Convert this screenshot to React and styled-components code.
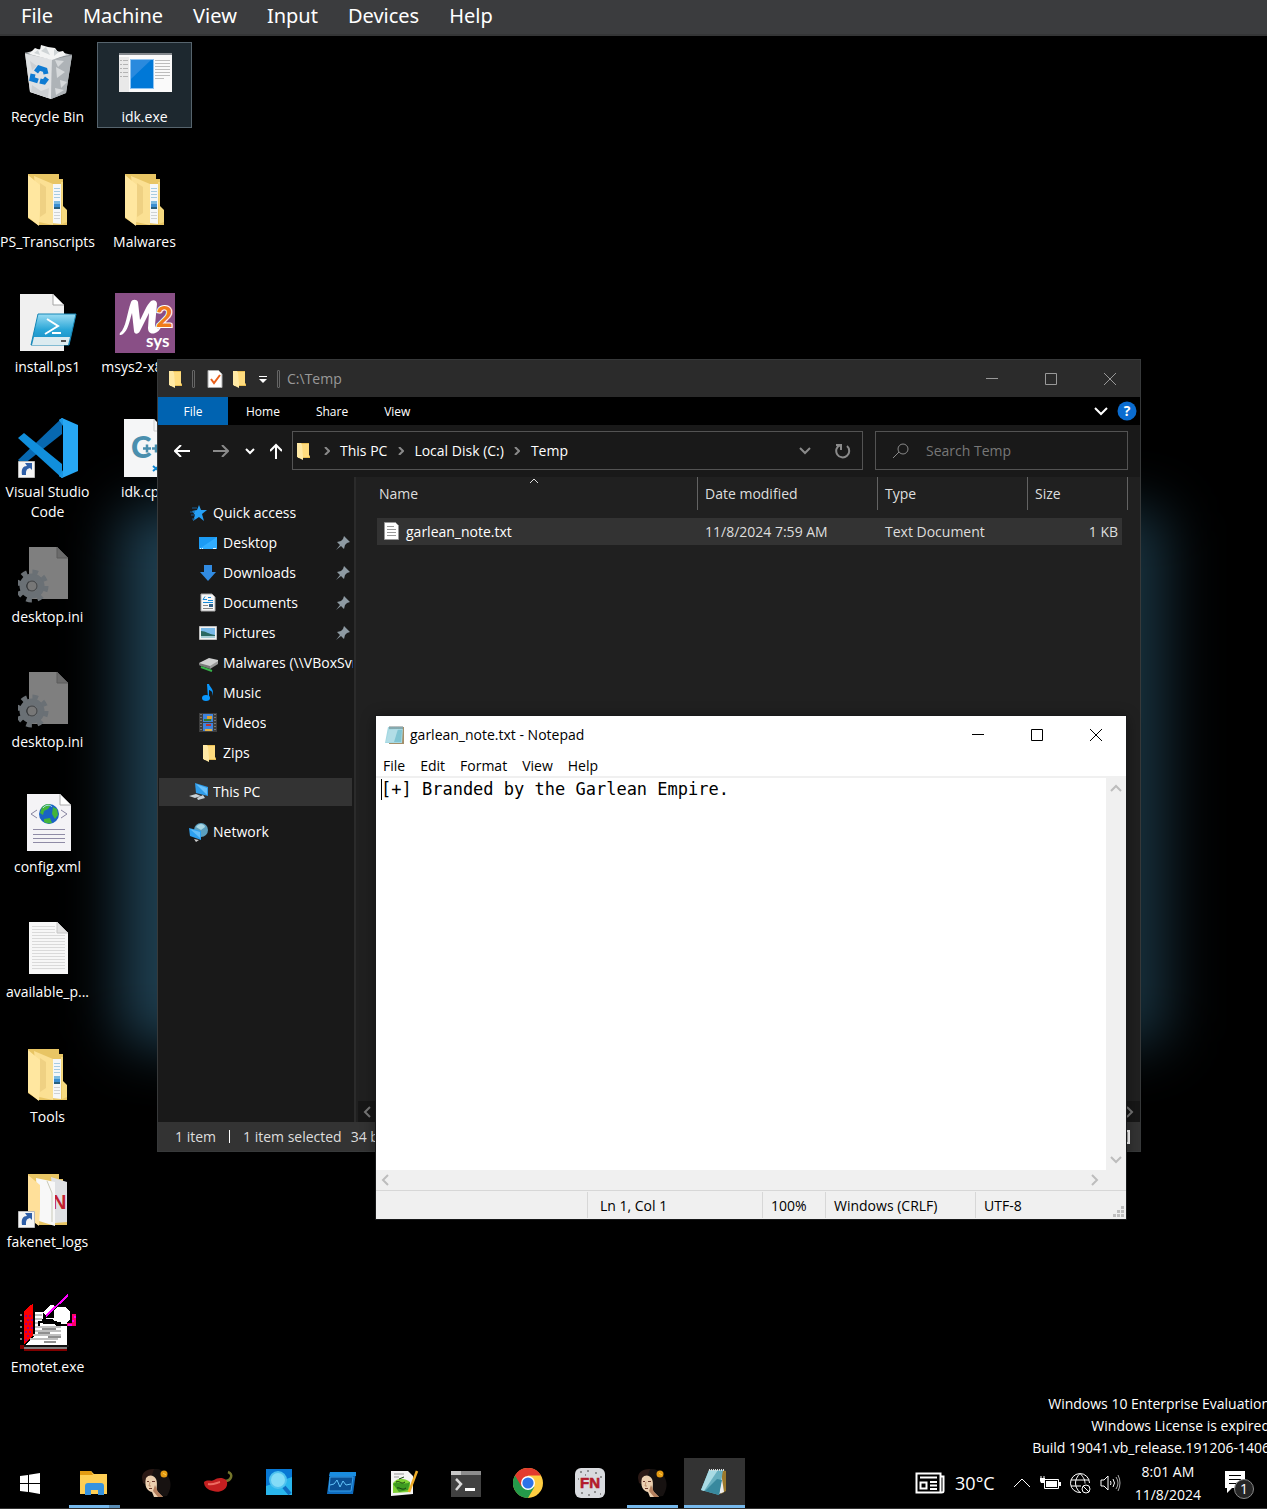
import React from "react";
import styled, { createGlobalStyle } from "styled-components";

const ui = `"Open Sans", "Noto Sans", sans-serif`;

const GlobalStyle = createGlobalStyle`
  * { box-sizing: border-box; }
  body { margin: 0; background: #000; font-family: ${ui}; font-size: 14px; line-height: 20px; color: #fff; }
  button, input, textarea { font: inherit; color: inherit; border: 0; padding: 0; margin: 0; background: none; outline: 0; border-radius: 0; }
  a { color: inherit; text-decoration: none; }
  ul { list-style: none; margin: 0; padding: 0; }
  svg { display: block; flex: none; }
`;

/* ---------- shell ---------- */

const Shell = styled.div`
  min-height: 100vh;
  display: flex;
  flex-direction: column;
  overflow: hidden;
`;

const HostMenu = styled.nav`
  height: 36px;
  display: flex;
  align-items: center;
  gap: 30px;
  padding: 0 21px 2px;
  background: #3b3c3e;
  border-bottom: 2px solid #343536;
  font: 20px/30px "Noto Sans", sans-serif;
`;

const Desktop = styled.main`
  position: relative;
  flex: 1;
  padding-top: 6px;
  background: #000;
`;

const Glow = styled.div`
  position: absolute;
  top: 472px;
  bottom: 412px;
  left: 120px;
  right: 100px;
  border-radius: 20px;
  background: linear-gradient(90deg, #1f4052, #18323f);
  filter: blur(28px);
`;

const IconGrid = styled.div`
  position: relative;
  display: grid;
  grid-auto-flow: column;
  grid-template-rows: repeat(11, 125px);
  grid-auto-columns: 95px;
  column-gap: 2px;
  align-items: start;
`;

const Shortcut = styled.button`
  display: flex;
  flex-direction: column;
  align-items: center;
  gap: 2px;
  padding: 1px 0 0;
  min-height: 86px;
  white-space: normal;
  ${(p) => p.$selected && "background: #1d282f; box-shadow: inset 0 0 0 1px #56646d;"}
`;

const Label = styled.span`
  width: 100%;
  padding-top: 2px;
  text-align: center;
  line-height: 20px;
`;

const Watermark = styled.div`
  position: absolute;
  right: -3px;
  bottom: -1px;
  text-align: right;
  line-height: 22px;
`;

/* ---------- shared window parts ---------- */

const WinButtons = styled.div`
  display: flex;
  margin-left: auto;
  padding-right: 1px;
  height: 100%;
  color: ${(p) => p.$color};
`;

const WinButton = styled.button`
  width: 59px;
  display: grid;
  place-items: center;
`;

const Muted = styled.span`
  display: block;
  color: #8a8a8a;
`;

/* ---------- explorer ---------- */

const Explorer = styled.section`
  position: absolute;
  left: 157px;
  top: 323px;
  width: 984px;
  height: 793px;
  display: flex;
  flex-direction: column;
  background: #191919;
  border: 1px solid #37393a;
  overflow: hidden;
`;

const ExTitle = styled.header`
  height: 37px;
  display: flex;
  align-items: center;
  padding-left: 7px;
  background: #2b2b2b;
  color: #999;
`;

const QuickButton = styled.button`
  width: ${(p) => p.$w || 25}px;
  display: grid;
  place-items: center;
`;

const Bar = styled.span`
  width: 3px;
  height: 18px;
  border: 1px solid #666;
  border-radius: 1px;
`;

const ExCaption = styled.h1`
  margin: 0 0 0 5px;
  font: inherit;
`;

const Ribbon = styled.nav`
  height: 28px;
  display: flex;
  align-items: stretch;
  background: #000;
  font-size: 12px;
`;

const RibbonTab = styled.button`
  padding: 1px 18px 0;
  ${(p) => p.$file && "width: 70px; background: #0063b1;"}
`;

const RibbonEnd = styled.div`
  margin-left: auto;
  display: flex;
  align-items: center;
  gap: 8px;
  padding-right: 3px;
`;

const NavRow = styled.div`
  height: 52px;
  display: flex;
  align-items: center;
  padding: 0 12px 1px 4px;
`;

const NavButton = styled.button`
  width: ${(p) => p.$w}px;
  height: 36px;
  display: grid;
  place-items: center;
`;

const Address = styled.div`
  flex: 1;
  height: 39px;
  display: flex;
  align-items: center;
  border: 1px solid #535353;
`;

const Crumb = styled.a`
  white-space: nowrap;
`;

const CrumbSep = styled.span`
  width: 27px;
  display: grid;
  place-items: center;
`;

const AddressEnd = styled.div`
  margin-left: auto;
  display: flex;
`;

const Search = styled.label`
  width: 253px;
  height: 39px;
  margin-left: 12px;
  display: flex;
  align-items: center;
  gap: 17px;
  padding-left: 16px;
  border: 1px solid #535353;
  input { flex: 1; min-width: 0; }
  input::placeholder { color: #777; opacity: 1; }
`;

const ExBody = styled.div`
  flex: 1;
  min-height: 0;
  display: flex;
`;

const Sidebar = styled.aside`
  width: 198px;
  padding: 21px 0 0 1px;
  border-right: 2px solid #2b2b2b;
`;

const Branch = styled.ul`
  display: flex;
  flex-direction: column;
  margin-bottom: ${(p) => p.$after || 0}px;
`;

const TreeItem = styled.a`
  height: ${(p) => (p.$short ? 28 : 30)}px;
  margin-right: ${(p) => (p.$root ? 2 : 0)}px;
  padding: 0 ${(p) => (p.$pin ? 3 : 1)}px 0 ${(p) => (p.$root ? 30 : 40)}px;
  display: flex;
  align-items: center;
  gap: 4px;
  white-space: nowrap;
  background: ${(p) => (p.$active ? "#333" : "transparent")};
  svg:last-child { margin-left: auto; }
`;

const TreeLabel = styled.span`
  overflow: hidden;
`;

const FilePane = styled.div`
  flex: 1;
  min-width: 0;
  display: flex;
  flex-direction: column;
  background: #202020;
`;

const Table = styled.table`
  width: calc(100% - 33px);
  margin-left: 21px;
  table-layout: fixed;
  border-collapse: separate;
  border-spacing: 0;
`;

const Th = styled.th`
  width: ${(p) => p.$w || "auto"};
  padding: 0 0 8px;
  font-weight: 400;
  text-align: left;
  color: #dedede;
`;

const HeadCell = styled.div`
  position: relative;
  height: 33px;
  display: flex;
  align-items: center;
  padding-left: ${(p) => (p.$first ? 2 : 7)}px;
  border-right: 1px solid #636363;
`;

const SortMark = styled.span`
  position: absolute;
  top: 1px;
  left: 50%;
  margin-left: -8px;
`;

const Td = styled.td`
  height: 27px;
  padding: 0 7px;
  background: #333;
  color: #dedede;
  text-align: ${(p) => (p.$end ? "right" : "left")};
  ${(p) => p.$end && "padding-right: 4px; border-right: 6px solid #202020;"}
`;

const FileLink = styled.a`
  display: flex;
  align-items: center;
  gap: 6px;
  color: #fff;
`;

const DarkScroll = styled.div`
  height: 21px;
  margin: auto 0 0 2px;
  display: flex;
  justify-content: space-between;
  align-items: center;
  padding: 0 5px 0 4px;
  background: #171717;
  color: #777;
`;

const ExStatus = styled.footer`
  height: 29px;
  display: flex;
  align-items: center;
  padding: 0 10px 0 17px;
  background: #333;
  color: #dedede;
  svg { margin-left: auto; }
`;

const StatusSplit = styled.span`
  width: 1px;
  height: 13px;
  margin: 0 13px;
  background: #fff;
`;

const Gapped = styled.span`
  margin-left: 9px;
`;

/* ---------- notepad ---------- */

const Notepad = styled.section`
  position: absolute;
  left: 376px;
  top: 680px;
  width: 750px;
  height: 503px;
  display: flex;
  flex-direction: column;
  background: #fff;
  color: #000;
  box-shadow: 0 0 0 1px #18191a, 0 2px 14px rgba(0, 0, 0, 0.45);
`;

const NpTitle = styled.header`
  height: 37px;
  display: flex;
  align-items: center;
  gap: 5px;
  padding-left: 9px;
`;

const NpCaption = styled.h2`
  margin: 0;
  font: inherit;
`;

const NpMenu = styled.nav`
  height: 25px;
  display: flex;
  align-items: center;
  gap: 15px;
  padding: 2px 0 0 7px;
  border-bottom: 2px solid #f0f0f0;
`;

const NpBody = styled.div`
  position: relative;
  flex: 1;
  display: flex;
`;

const Editor = styled.textarea`
  flex: 1;
  padding: 0 5px;
  resize: none;
  overflow: hidden;
  white-space: pre;
  font: 17px/22px "DejaVu Sans Mono", monospace;
`;

const Caret = styled.span`
  position: absolute;
  left: 5px;
  top: 1px;
  width: 1px;
  height: 21px;
  background: #000;
`;

const VScroll = styled.div`
  width: 20px;
  display: flex;
  flex-direction: column;
  justify-content: space-between;
  align-items: center;
  padding: 5px 0;
  background: #f0f0f0;
  color: #bdbdbd;
`;

const HScroll = styled.div`
  height: 20px;
  display: flex;
  justify-content: space-between;
  align-items: center;
  padding: 0 26px 0 4px;
  background: #f0f0f0;
  color: #bdbdbd;
`;

const NpStatus = styled.footer`
  height: 29px;
  display: grid;
  grid-template-columns: 1fr 175px 63px 150px 151px;
  align-items: stretch;
  border-top: 1px solid #d7d7d7;
  background: #f0f0f0;
`;

const NpCell = styled.span`
  position: relative;
  display: flex;
  align-items: center;
  margin: 1px 0;
  padding: 1px 0 0 ${(p) => (p.$wide ? 12 : 8)}px;
  ${(p) => !p.$blank && "border-left: 1px solid #d7d7d7;"}
`;

const Grip = styled.span`
  margin: auto 2px 1px auto;
`;

/* ---------- taskbar ---------- */

const Taskbar = styled.footer`
  position: relative;
  height: 51px;
  display: flex;
  background: #000;
  border-bottom: 1px solid #333;
`;

const TaskButton = styled.button`
  position: relative;
  width: 62px;
  padding-right: 2px;
  display: grid;
  place-items: center;
  ${(p) => p.$active && "background: #333; background-clip: content-box; padding-right: 1px;"}
  &:first-child { width: 64px; padding-right: 4px; }
`;

const Running = styled.span`
  position: absolute;
  bottom: 0;
  left: ${(p) => (p.$full ? 0 : 5)}px;
  right: ${(p) => (p.$full ? 1 : 6)}px;
  height: 3px;
  background: #76b9ed;
  ${(p) => p.$stack && "border-right: 11px solid #5a8db5;"}
`;

const Tray = styled.div`
  margin-left: auto;
  display: flex;
  align-items: center;
  padding-right: 13px;
`;

const Weather = styled.button`
  display: flex;
  align-items: center;
  gap: 10px;
  margin-right: 18px;
  font-size: 18px;
`;

const TrayIcons = styled.div`
  display: flex;
  align-items: center;
  gap: 9px;
`;

const Clock = styled.button`
  margin: 0 22px 0 14px;
  line-height: 23px;
  text-align: center;
`;

/* ---------- drawings ---------- */

const Art = ({ size = 60, box = size, h, children, ...rest }) => (
  <svg width={size} height={h || size} viewBox={`0 0 ${box} ${h || box}`} fill="none" aria-hidden="true" {...rest}>
    {children}
  </svg>
);

const Arrow = ({ d, w = 12, h = 12, s = 2 }) => (
  <svg width={w} height={h} viewBox={`0 0 ${w} ${h}`} fill="none" stroke="currentColor" strokeWidth={s} aria-hidden="true">
    <path d={d} />
  </svg>
);

const ShortcutMark = () => (
  <g>
    <path d="M.5 43.5h16v16H.5z" fill="#f4f4f4" stroke="#b9b9b9" />
    <path d="M4 57c-1-6 1-9 5-9l-2-3h7v7l-2-2c-4 1-4 3-4 7z" fill="#2f5fa8" />
  </g>
);

const BinArt = () => (
  <Art>
    <path d="M7 10L26 5l28 7-6 38-15 6-21-7z" fill="#c9cdd0" />
    <path d="M7 10l27 6-1 40-21-7z" fill="#dfe1e3" />
    <path d="M34 16l20-4-6 38-15 6z" fill="#aeb3b7" />
    <path d="M7 10l27 6 20-4" stroke="#8e9498" />
    <path d="M11 11l6-6 5 2 1-5 7 2 7 1 3 4 5-1 3 4-14 5z" fill="#f3f4f4" />
    <path d="M23 8l5-4 4 8zm13-2l5 3-5 4zM16 10l4-3 2 5z" fill="#cfd4d6" />
    <path d="M38 24l9 5-8 6zm4 13l7 2-6 6zm-5-20l9 1-6 6zM37 45l9 2-8 5z" fill="#d6d9db" />
    <path d="M12 18l7 5-5 4zM14 42l9 6 8-3-1 10-17-6z" fill="#cdd0d3" />
    <g stroke="#0f7bd2" strokeWidth="5">
      <path d="M18 29l3-4 6 2 1 4" />
      <path d="M15 31l-1 5 6 2" />
      <path d="M29 35l-3 4-4-1" />
    </g>
  </Art>
);

const AppWindowArt = () => (
  <Art>
    <path d="M4 10h53v39H4z" fill="#fafafa" />
    <path d="M4 10h53v2H4z" fill="#84898e" />
    <path d="M4 14h10v35H4z" fill="#e9e9e9" />
    <path d="M15 16h24v30H15z" fill="#8dc3f2" />
    <path d="M16 17h22v28H16z" fill="#0078d7" />
    <path d="M16 17h20L16 36z" fill="#2a8ade" />
    <path d="M40 17.500h15M40 20.500h15M40 23.500h15M40 26.500h15M40 29.500h15M40 32.500h15M40 35.500h9" stroke="#bdbdbd" />
    <path d="M5 17.500h8M5 21.500h8M5 25.500h8M5 29.500h8M5 33.500h8" stroke="#b4b4b4" strokeDasharray="2 1 5" />
  </Art>
);

const FolderBack = () => <path d="M10 6h31v5h4v30l4 3v13H20L10 50z" fill="#e8c564" />;

const FolderArt = () => (
  <Art>
    <FolderBack />
    <path d="M34 16h9v40l-9-1z" fill="#f5f7f8" />
    <path d="M36 20.500h6M36 23.500h6M36 26.500h6M36 29.500h6" stroke="#a8cbe0" />
    <path d="M36 33h6v4h-6z" fill="#7dbbe0" />
    <path d="M36 36h6v3h-6z" fill="#3b8ed0" />
    <path d="M36 39h6v2h-6z" fill="#28607e" />
    <path d="M36 44.500h6M36 47.500h6M36 50.500h6" stroke="#ced2d4" />
    <path d="M43 14h2v24l4 4v12l-5 2z" fill="#f5d97f" />
    <path d="M16 8l19 8v41l-14-3z" fill="#fbe093" />
    <path d="M22 15l6 4v26l-6 4z" fill="#efd183" />
    <path d="M10 7l12 10v24l-1 17-11-9z" fill="#ffe7a0" />
  </Art>
);

const LogsFolderArt = () => (
  <Art>
    <FolderBack />
    <path d="M33 9l16 5v40l-12 1z" fill="#dfe1e4" />
    <text x="34" y="41" fontFamily="Liberation Sans, sans-serif" fontWeight="700" fontSize="20" fill="#c3202e">N</text>
    <path d="M18 10l19 4v44l-16-5z" fill="#f8f8f8" />
    <path d="M29 13l5 12v29" stroke="#c9c9b8" />
    <path d="M10 7l12 10v24l-1 17-11-9z" fill="#ffe09a" />
    <ShortcutMark />
  </Art>
);

const ScriptArt = () => (
  <Art>
    <defs>
      <linearGradient id="ps" x1="0" y1="0" x2="0" y2="1">
        <stop stopColor="#9adcf3" />
        <stop offset=".5" stopColor="#2ba7d8" />
        <stop offset="1" stopColor="#1387bf" />
      </linearGradient>
    </defs>
    <path d="M2 1h33l11 11v46H2z" fill="#f0f0f0" />
    <path d="M35 1v11h11z" fill="#fff" stroke="#a5a5a5" />
    <path d="M20 21h38l-7 31H13z" fill="url(#ps)" stroke="#1686b5" />
    <path d="M16 44h36l-2 8H14z" fill="#dcebf0" />
    <path d="M29 26l11 7-13 8M34 40h9" stroke="#fff" strokeWidth="2" />
    <path d="M43 47h5v2h-5z" fill="#555" />
  </Art>
);

const MsysArt = () => (
  <Art>
    <path d="M0 0h60v60H0z" fill="#894f86" />
    <path d="M5 40C11 35 12 20 16 9c1-3 6-3 7 0l2 18C29 20 31 13 36 8c3-2 6 0 6 3l-2 21c1 4 3 4 6 2-3 8-13 9-13 1l1-15-9 18c-2 4-6 3-6 0l-2-18c-3 10-4 17-9 21-3 2-4 1-3-1z" fill="#fff" />
    <text x="41" y="34" fontFamily="Lato, sans-serif" fontSize="29" fontWeight="900" fill="#f07c1c" stroke="#fff" strokeWidth="2" paintOrder="stroke">2</text>
    <text x="31" y="54" fontFamily="Lato, sans-serif" fontSize="17" fontWeight="700" fill="#fff">sys</text>
  </Art>
);

const CodeArt = () => (
  <Art>
    <path d="M0 42L44 0v16L6 46z" fill="#0768b0" />
    <path d="M0 20l6-5 38 31v14z" fill="#118fdc" />
    <path d="M44 0l16 7v46l-16 7-3-2 4-4V6l-4-4z" fill="#27a7f4" />
    <path d="M41 2l4-2v60l-4-2 4-6V8z" fill="#1b96e4" />
    <ShortcutMark />
  </Art>
);

const CppArt = () => (
  <Art>
    <path d="M9 1h30l11 11v47H9z" fill="#f5f6f7" />
    <path d="M39 1v12h12" stroke="#ccc" />
    <text x="16" y="40" fontFamily="Lato, sans-serif" fontWeight="900" fontSize="31" fill="#4a8fae">C</text>
    <path d="M28 30.500h8M32 26.500v8M37 30.500h8M41 26.500v8" stroke="#4a8fae" strokeWidth="2.500" />
    <path d="M38 48l6 5M38 53l6-5" stroke="#0d84cf" strokeWidth="2" />
  </Art>
);

const GearFileArt = () => (
  <Art>
    <path d="M11 4h28l11 11v41H11z" fill="#7f7f7f" />
    <path d="M39 4v11h11z" fill="#6b6b6b" stroke="#5c5c5c" />
    <g transform="translate(14 43)">
      <circle r="9" stroke="#6a7075" strokeWidth="7" />
      <circle r="14" stroke="#6a7075" strokeWidth="5" strokeDasharray="5.500 5.495" />
      <circle r="5" fill="#777" stroke="#3c3f42" />
    </g>
  </Art>
);

const XmlArt = () => (
  <Art>
    <path d="M9 1h33l11 11v46H9z" fill="#f4f3f6" />
    <path d="M42 1v11h11z" fill="#fff" stroke="#aaa" />
    <circle cx="31" cy="21" r="10" fill="#1a63c4" />
    <path d="M24 14c3-3 7-4 9-2l-3 4-4 2-1 4-3-2zM35 14l4 2 1 6-3 4-3-5zM26 26l6-1 2 5c-3 1-6 0-8-1z" fill="#43b53b" />
    <path d="M25 15c3-4 8-3 9-1" stroke="#a9dcf5" />
    <path d="M19 17l-6 4 6 4M43 17l6 4-6 4" stroke="#8784a0" />
    <path d="M15 36.500h32M15 41.500h32M15 45.500h32M15 49.500h32" stroke="#8f8ba6" />
  </Art>
);

const TextFileArt = () => (
  <Art>
    <path d="M11 4h28l11 11v41H11z" fill="#f7f7f7" />
    <path d="M14 8.500h23M14 11.500h23M14 14.500h23M14 17.500h33M14 20.500h33M14 23.500h33M14 26.500h33M14 29.500h33M14 32.500h33M14 35.500h33M14 38.500h33M14 41.500h33M14 44.500h33M14 47.500h33M14 50.500h33" stroke="#dadada" />
    <path d="M39 4v11h11z" fill="#e2e2e2" stroke="#c6c6c6" />
  </Art>
);

const EmotetArt = () => (
  <Art shapeRendering="crispEdges">
    <path d="M2 21h2v2H2zm0 6h2v2H2zm0 6h2v2H2zm0 6h2v2H2zm0 6h2v2H2z" fill="#808080" />
    <path d="M6 19l4-5 5-3v32l-9 8z" fill="#f00" />
    <path d="M7 22h2v2H7zm4 0h2v2h-2zm-2 4h2v2H9zm4 0h2v2h-2zm-6 4h2v2H7zm4 0h2v2h-2zm-2 4h2v2H9zm4 0h2v2h-2zm-6 4h2v2H7zm4 0h2v2h-2zm-2 4h2v2H9zM7 46h2v2H7z" fill="#a0007e" />
    <path d="M17 19h8v12h18v-2h6v23H8l9-10z" fill="#fff" />
    <path d="M17 22h7M17 26h7M17 30h5M17 34h26M17 38h26M15 42h28M12 46h28" stroke="#c0c0c0" strokeWidth="2" />
    <path d="M24 36h14M20 40h12M30 44h13M26 49h12" stroke="#909090" strokeWidth="2" />
    <path d="M36 17l3-3h9l4 5v7l-3 3H37l-3-3h-6v-2l8-2z" fill="#fff" />
    <path d="M34 17h2v8h-8v-2h6zM24 26h2v4h-4v3h-2v-5h4zM29 28h9l3 3h8v2H39l-4-3h-6z" fill="#000" />
    <path d="M25 20l7-8h4v2l-9 8z" fill="#fff" />
    <path d="M28 23L50 2" stroke="#f0f" strokeWidth="2" />
    <path d="M54 21h4v12h-9v-3h5z" fill="#ff006a" />
    <path d="M56 23h2v2h-2zm-2 4h2v2h-2zm-4 4h4v2h-4z" fill="#f0f" />
    <path d="M6 54h43v2H6z" fill="#808080" />
    <path d="M6 52h45v2H6z" fill="#111" />
    <path d="M6 56h43v2H6zM2 52h4v4H2z" fill="#800000" />
  </Art>
);

const MiniFolder = () => (
  <Art size={20} h={20}>
    <path d="M5 2h11v12l1 1v2H5z" fill="#e9bf55" />
    <path d="M4 2h4l2 3v14l-6-3z" fill="#ffe9a5" />
    <path d="M9 3h7v13h-6z" fill="#ffdc7e" />
  </Art>
);

const QuickStar = () => (
  <Art size={20}>
    <path d="M10 2l2 5h6l-5 4 2 7-5-4-6 4 2-6-3-4 5-1z" fill="#26a0f5" />
    <path d="M3 5h5M1 9h5M2 12h4M3 16h3" stroke="#1a5d91" />
  </Art>
);
const DesktopMini = () => (
  <Art size={20}>
    <path d="M0 4h18v12H0z" fill="#1c9bf4" />
    <path d="M0 16L18 4v12z" fill="#31adff" />
    <path d="M1 15.500h1M3 15.500h1M14 15.500h3" stroke="#e8f6ff" />
  </Art>
);
const DownMini = () => (
  <Art size={20}><path d="M5 2h8v7h4l-8 9-8-9h4z" fill="#318be2" /></Art>
);
const DocMini = () => (
  <Art size={20}>
    <path d="M2 1h11l3 3v14H2z" fill="#f7f7f7" stroke="#aaa" />
    <path d="M4 6.500h4M6 3.500l-2 3M4 9.500h10M9 4.500h3M9 7.500h5" stroke="#168ad8" />
    <path d="M4 12.500h5M4 15.500h10" stroke="#888" /><path d="M10 11h4v3h-4z" fill="#315f86" />
  </Art>
);
const PicMini = () => (
  <Art size={20}>
    <path d="M.5 3.500h17v13H.5z" fill="#f2f2f2" stroke="#bdbdbd" />
    <path d="M2 5h14v10H2z" fill="#79b9e8" /><path d="M2 8c5 0 7 3 14 4v3H2z" fill="#2b6760" /><path d="M2 13h14v2H2z" fill="#a8cdd5" />
  </Art>
);
const DriveMini = () => (
  <Art size={20}>
    <path d="M0 10l10-5 9 2v3l-8 5-11-3z" fill="#cfd0d0" /><path d="M0 10l11 3v3L0 12z" fill="#777" /><path d="M11 13l8-5v3l-8 5z" fill="#999" />
    <path d="M2 14l11 4" stroke="#38b54a" strokeWidth="2" />
  </Art>
);
const MusicMini = () => (
  <Art size={20}><ellipse cx="7" cy="15" rx="4" ry="3" fill="#0a98ff" /><path d="M8 1h2c1 4 6 5 3 12 1-5-1-5-3-6v9H9z" fill="#0a98ff" /></Art>
);
const VideoMini = () => (
  <Art size={20}>
    <path d="M0 0h18v19H0z" fill="#3e3e3e" /><path d="M4 1h10v8H4zM4 10h10v8H4z" fill="#3f83dd" />
    <path d="M8 3h5v3H8z" fill="#e0a030" /><path d="M5 6h7v2H5z" fill="#2e7a35" /><path d="M7 11h5v2H7z" fill="#b33" /><path d="M6 16h7v2H6z" fill="#e0b04a" />
    <path d="M2 1v18M16 1v18" stroke="#777" strokeWidth="2" strokeDasharray="1 2" />
  </Art>
);
const PcMini = () => (
  <Art size={20}>
    <path d="M6 1l13 4v9L7 11z" fill="#2f9ce9" /><path d="M7 2l11 4v7z" fill="#69c0fa" />
    <path d="M0 14l7-2 5 2-6 2zM8 16l6-3 2 3-7 2z" fill="#c8d2d8" />
  </Art>
);
const NetMini = () => (
  <Art size={20}>
    <circle cx="12" cy="8" r="7" fill="#5b9fbe" /><path d="M7 5c3-5 9-3 9 0l-4 3z" fill="#a7d6e4" />
    <path d="M0 6l12 3v9L1 14z" fill="#2da0f0" /><path d="M1 7l10 3v6z" fill="#63bdf8" /><path d="M5 17l5 1-3 2z" fill="#ccc" />
  </Art>
);
const Pin = () => (
  <Art size={16}>
    <path d="M9 1l6 6-3 1-2 2-1 4-3-3-5 4 4-5-3-3 4-1 2-2z" fill="#8e9aa2" />
  </Art>
);

const NotepadArt = () => (
  <Art size={20}>
    <path d="M5 2h14v17H4z" fill="#a48f6a" />
    <path d="M3 2h15l-1 16H0z" fill="#a5d8e2" />
    <path d="M8 5h9l-1 12H3z" fill="#80c4d2" />
    <path d="M4 5l9-1-4 13H1z" fill="#b2dde6" />
    <path d="M5 1v3M7 1v3M9 1v3M11 1v3M13 1v3M15 1v3M17 1v3" stroke="#566" strokeWidth=".8" />
  </Art>
);

const TaskNotepad = () => (
  <Art size={30}>
    <path d="M22 2l4 1v20l-5 3z" fill="#9c7a2c" />
    <path d="M21 4l3 20-5 2z" fill="#eee" />
    <path d="M9 2h14l-4 25-18-5z" fill="#67afbf" />
    <path d="M9 2h9L4 23l-3-1z" fill="#a9dbe4" />
    <path d="M17 11l5 1-3 15-14-4z" fill="#38899e" />
    <path d="M9 2h15" stroke="#d8dddd" strokeWidth="2" strokeDasharray="1 1" />
  </Art>
);

const WindowsLogo = () => (
  <Art size={22}>
    <path d="M1 4l8-1v8H1zM10 2.800L21 1v10H10zM1 12h8v8l-8-1zM10 12h11v10l-11-2z" fill="#fff" />
  </Art>
);
const ExplorerLogo = () => (
  <Art size={30}>
    <path d="M1 3h11l3 3h13v20H1z" fill="#ffcf55" /><path d="M1 3h11l2 4H1z" fill="#e39b12" />
    <path d="M6 27v-9q0-3 3-3h13q3 0 3 3v9h-6v-5h-7v5z" fill="#3793df" />
  </Art>
);
const Portrait = () => (
  <Art size={30}>
    <path d="M2 8C5 0 20-2 25 6c6 6 5 13 3 18l-2 4-9 1-9-6z" fill="#171211" />
    <path d="M1 10C1 4 6 1 13 1l-2 6-5 3-2 6-2-1z" fill="#2b1915" />
    <path d="M5 10c3-4 8-3 10 1 2 5 0 9 1 12l6 6H13l-2-5c-5-1-8-6-6-14z" fill="#ecd0b0" />
    <path d="M14 17l3 7 5 5h-5l-5-6z" fill="#b5805e" />
    <path d="M6 13.500h2M11 13.500h3M8 20.500h3" stroke="#6b382b" />
    <path d="M9 14l-1 4h2" stroke="#b5845f" strokeWidth=".8" />
    <circle cx="23" cy="6" r="3.500" fill="#e59a12" /><path d="M22 5l3 2" stroke="#ffd04f" />
  </Art>
);
const Pepper = () => (
  <Art size={30}>
    <path d="M22 13c6 0 9-7 3-9" stroke="#74752b" strokeWidth="2.500" />
    <path d="M1 14c4-3 7 0 10-2 5-4 15-2 13 5-1 6-9 8-14 6-5-1-9-4-9-9z" fill="#c41f20" />
    <path d="M5 16c5 1 8-1 12-2" stroke="#ed6b61" strokeWidth="2" />
  </Art>
);
const Finder = () => (
  <Art size={30}>
    <path d="M1 1h26v26H1z" fill="#0878d4" /><path d="M1 18l26-9v18H1z" fill="#29b6ec" /><path d="M19 19l6 7" stroke="#0f6fc2" strokeWidth="4" />
    <circle cx="13" cy="12" r="8" fill="#83dcf7" stroke="#4fc3f0" strokeWidth="2" />
  </Art>
);
const Monitor = () => (
  <Art size={30}>
    <path d="M3 4h26l-3 22H0z" fill="#0f6cbf" /><path d="M3 4h26v4H2z" fill="#1a8de0" /><path d="M3 9h23l-2 14H2z" fill="#0a4f93" stroke="#36a0ea" />
    <path d="M3 17l4-1 3-4 3 7 3-6 3 4 5-1" stroke="#62c4fa" />
  </Art>
);
const NotePlus = () => (
  <Art size={30}>
    <path d="M2 3h17l5 5v18L2 28z" fill="#f4f4f4" /><path d="M5 6h10M5 9h5" stroke="#999" />
    <path d="M4 15c4-5 10-6 17-1v10L4 25z" fill="#7fd236" /><path d="M4 16c6-4 10 2 17-2l-2 8-9 2z" fill="#3e9b22" />
    <path d="M7 14c4-2 5 3 9 0M8 20c3-1 5 3 9 0M10 11l5-2" stroke="#123b10" /><path d="M20 24L28 3" stroke="#f0ad28" strokeWidth="2.500" />
  </Art>
);
const Terminal = () => (
  <Art size={30}>
    <path d="M0 3h30v26H0z" fill="#414141" /><path d="M0 3h30v4H0z" fill="#8d8d8d" /><path d="M0 3h10v4H0z" fill="#c8c8c8" />
    <path d="M5 11l5 5-5 6" stroke="#d9d9d9" strokeWidth="2.500" /><path d="M14 20h10v3H14z" fill="#fff" />
  </Art>
);
const ChromeLogo = () => (
  <Art size={30}>
    <circle cx="15" cy="15" r="15" fill="#ffcd41" />
    <path d="M2 7.500A15 15 0 0 0 15 30l6.500-11.300L15 15z" fill="#249a4a" />
    <path d="M28 7.500H15v7.500l6.500 3.700z" fill="#ffcd41" />
    <path d="M2 7.500A15 15 0 0 1 28 7.500H15l-6.500 11z" fill="#e33b2e" />
    <circle cx="15" cy="15" r="7" fill="#fff" /><circle cx="15" cy="15" r="5.600" fill="#2d73e8" />
  </Art>
);
const FakeNet = () => (
  <Art size={30}>
    <rect width="30" height="30" rx="6" fill="#d9dbdf" />
    <path d="M5 4h2M12 3h2M20 5h2M25 9h2M3 11h1M6 25h2M13 27h2M19 24h2M25 26h1M10 7h1" stroke="#777" strokeWidth="1.500" />
    <text x="15" y="20" textAnchor="middle" fontFamily="Liberation Sans, sans-serif" fontWeight="700" fontSize="15" fill="#b31b2b" stroke="#b31b2b" strokeWidth=".6">FN</text>
  </Art>
);

const NewsIcon = () => (
  <Art size={30} h={22}>
    <path d="M1.500 1.500h24v19h-24zM26 4.500h2.500V19q0 1.500-2 1.500H24" stroke="#fff" strokeWidth="2" />
    <path d="M5 5.500h17M15 10h7M15 13.500h7M15 17h7" stroke="#fff" strokeWidth="2" /><path d="M5.500 10.500h6v6h-6z" stroke="#fff" strokeWidth="2" />
  </Art>
);
const BatteryIcon = () => (
  <Art size={21} h={14}>
    <path d="M4.500 3.500h14v9h-14z" stroke="#fff" /><path d="M6 5h11v6H6zM19 6h2v4h-2z" fill="#fff" />
    <path d="M1 0v3M4 0v3" stroke="#fff" /><path d="M0 2h5v3l-1 2H1L0 5z" fill="#fff" />
  </Art>
);
const GlobeIcon = () => (
  <Art size={21}>
    <path d="M19.500 10A9.500 9.500 0 1 0 11 19.500M10 .5c-6 6-6 13 0 19M10 .5c4 4 5 7 5 10M1 7h18M1 13h10" stroke="#fff" />
    <circle cx="16" cy="16" r="4" stroke="#fff" /><path d="M13 13l6 6" stroke="#fff" />
  </Art>
);
const SpeakerIcon = () => (
  <Art size={21} h={20}>
    <path d="M1 7h3l4-4v14l-4-4H1z" stroke="#fff" /><path d="M10.500 8q1 2 0 4M13 6q3 4 0 8" stroke="#fff" /><path d="M16 4q4 6 0 12M18 2q4 8 0 16" stroke="#aaa" />
  </Art>
);
const ActionIcon = () => (
  <Art size={31} h={32}>
    <path d="M2 4h20v17H9l-5 5v-5H2z" fill="#fff" /><path d="M6 8.500h12M6 12.500h12M6 16.500h7" stroke="#000" />
    <circle cx="21" cy="22" r="9.500" fill="#262626" stroke="#8a8a8a" />
    <text x="21" y="27" textAnchor="middle" fontFamily="Open Sans, sans-serif" fontSize="14" fill="#fff">1</text>
  </Art>
);

const Controls = ({ color }) => (
  <WinButtons $color={color}>
    <WinButton aria-label="Minimize"><Arrow s={1} d="M0 5.500h12" /></WinButton>
    <WinButton aria-label="Maximize"><Arrow s={1} d="M.5.5h11v11H.5z" /></WinButton>
    <WinButton aria-label="Close"><Arrow s={1} d="M0 0l12 12M12 0L0 12" /></WinButton>
  </WinButtons>
);

/* ---------- data ---------- */

const shortcuts = [
  ["Recycle Bin", BinArt],
  ["PS_Transcripts", FolderArt],
  ["install.ps1", ScriptArt],
  ["Visual Studio Code", CodeArt],
  ["desktop.ini", GearFileArt],
  ["desktop.ini", GearFileArt],
  ["config.xml", XmlArt],
  ["available_p...", TextFileArt],
  ["Tools", FolderArt],
  ["fakenet_logs", LogsFolderArt],
  ["Emotet.exe", EmotetArt],
  ["idk.exe", AppWindowArt, true],
  ["Malwares", FolderArt],
  ["msys2-x86_...", MsysArt],
  ["idk.cpp", CppArt],
];

const pinned = [
  { label: "Quick access", icon: QuickStar, root: true },
  { label: "Desktop", icon: DesktopMini, pin: true },
  { label: "Downloads", icon: DownMini, pin: true },
  { label: "Documents", icon: DocMini, pin: true },
  { label: "Pictures", icon: PicMini, pin: true },
  { label: "Malwares (\\\\VBoxSvr)", icon: DriveMini },
  { label: "Music", icon: MusicMini },
  { label: "Videos", icon: VideoMini },
  { label: "Zips", icon: MiniFolder },
];
const thisPc = [{ label: "This PC", icon: PcMini, root: true, short: true, active: true }];
const network = [{ label: "Network", icon: NetMini, root: true, short: true }];

const tasks = [
  ["Start", WindowsLogo],
  ["File Explorer", ExplorerLogo, "stack"],
  ["Portrait", Portrait],
  ["Pepper", Pepper],
  ["Finder", Finder],
  ["Monitor", Monitor],
  ["Notepad++", NotePlus],
  ["Terminal", Terminal],
  ["Chrome", ChromeLogo],
  ["FakeNet", FakeNet],
  ["Portrait window", Portrait, "run"],
  ["Notepad", TaskNotepad, "active"],
];

/* ---------- windows ---------- */

const chevronRight = "M1 0l4 4-4 4";

const Tree = ({ items, after }) => (
  <Branch $after={after}>
    {items.map(({ label, icon: Icon, root, pin, short, active }) => (
      <li key={label}>
        <TreeItem href="#" $root={root} $short={short} $active={active} $pin={pin}>
          <Icon />
          <TreeLabel>{label}</TreeLabel>
          {pin && <Pin />}
        </TreeItem>
      </li>
    ))}
  </Branch>
);

const ExplorerWindow = () => (
  <Explorer aria-label="File Explorer">
    <ExTitle>
      <QuickButton aria-label="Temp folder" $w={20}><MiniFolder /></QuickButton>
      <QuickButton as="span" $w={16}><Bar /></QuickButton>
      <QuickButton aria-label="Properties" $w={27}>
        <Art size={16} h={18}><path d="M1 .5h10.500L15 4v13.500H1z" fill="#fff" stroke="#aaa" /><path d="M4 9l3 4 6-8" stroke="#e8601c" strokeWidth="2" /></Art>
      </QuickButton>
      <QuickButton aria-label="New folder" $w={22}><MiniFolder /></QuickButton>
      <QuickButton aria-label="Customize toolbar" $w={25}>
        <Art size={8}><path d="M0 1h8v1H0zM0 4h8L4 8z" fill="#fff" /></Art>
      </QuickButton>
      <QuickButton as="span" $w={7}><Bar /></QuickButton>
      <ExCaption>C:\Temp</ExCaption>
      <Controls color="#999" />
    </ExTitle>
    <Ribbon>
      <RibbonTab $file>File</RibbonTab>
      <RibbonTab>Home</RibbonTab>
      <RibbonTab>Share</RibbonTab>
      <RibbonTab>View</RibbonTab>
      <RibbonEnd>
        <button aria-label="Expand ribbon"><Arrow w={16} h={10} d="M2 2l6 6 6-6" /></button>
        <button aria-label="Help">
          <Art size={20}>
            <circle cx="10" cy="10" r="9.500" fill="#0a6cd0" />
            <text x="10" y="15" textAnchor="middle" fontFamily="Open Sans, sans-serif" fontWeight="700" fontSize="14" fill="#fff">?</text>
          </Art>
        </button>
      </RibbonEnd>
    </Ribbon>
    <NavRow>
      <NavButton $w={39} aria-label="Back"><Arrow w={16} h={12} d="M7 0L1 6l6 6M1 6h15" /></NavButton>
      <NavButton $w={39} aria-label="Forward"><Muted><Arrow w={16} h={12} d="M9 0l6 6-6 6M15 6H0" /></Muted></NavButton>
      <NavButton $w={20} aria-label="Recent"><Arrow w={10} h={8} d="M1 2l4 4 4-4" /></NavButton>
      <NavButton $w={32} aria-label="Up"><Arrow w={12} h={16} d="M0 8l6-6 6 6M6 2v14" /></NavButton>
      <Address>
        <MiniFolder />
        <CrumbSep><Muted><Arrow w={6} h={8} d={chevronRight} /></Muted></CrumbSep>
        <Crumb href="#pc">This PC</Crumb>
        <CrumbSep><Muted><Arrow w={6} h={8} d={chevronRight} /></Muted></CrumbSep>
        <Crumb href="#c">Local Disk (C:)</Crumb>
        <CrumbSep><Muted><Arrow w={6} h={8} d={chevronRight} /></Muted></CrumbSep>
        <Crumb href="#temp">Temp</Crumb>
        <AddressEnd>
          <NavButton $w={38} aria-label="Previous locations"><Muted><Arrow w={12} h={8} d="M1 1l5 5 5-5" /></Muted></NavButton>
          <NavButton $w={38} aria-label="Refresh">
            <Muted><Arrow w={16} h={16} d="M12 3a6.500 6.500 0 1 1-7-1M1 2h5v5" /></Muted>
          </NavButton>
        </AddressEnd>
      </Address>
      <Search>
        <Muted><Arrow s={1} w={17} h={16} d="M16 6a5 5 0 1 1-10 0 5 5 0 1 1 10 0M7 9l-6 6" /></Muted>
        <input type="search" aria-label="Search Temp" placeholder="Search Temp" />
      </Search>
    </NavRow>
    <ExBody>
      <Sidebar>
        <Tree items={pinned} after={10} />
        <Tree items={thisPc} after={12} />
        <Tree items={network} />
      </Sidebar>
      <FilePane>
        <Table>
          <thead>
            <tr>
              <Th><HeadCell $first>Name<SortMark><Arrow s={1} w={10} h={6} d="M1 5l4-4 4 4" /></SortMark></HeadCell></Th>
              <Th $w="180px"><HeadCell>Date modified</HeadCell></Th>
              <Th $w="150px"><HeadCell>Type</HeadCell></Th>
              <Th $w="100px"><HeadCell>Size</HeadCell></Th>
            </tr>
          </thead>
          <tbody>
            <tr>
              <Td>
                <FileLink href="#note">
                  <Art size={16} h={19}><path d="M.5.5h11l3 3v14H.5z" fill="#fff" stroke="#999" /><path d="M3 4.500h7M3 7.500h9M3 10.500h9M3 13.500h9" stroke="#999" /></Art>
                  garlean_note.txt
                </FileLink>
              </Td>
              <Td>11/8/2024 7:59 AM</Td>
              <Td>Text Document</Td>
              <Td $end>1 KB</Td>
            </tr>
          </tbody>
        </Table>
        <DarkScroll>
          <Arrow w={10} h={12} d="M8 1L3 6l5 5" />
          <Arrow w={10} h={12} d="M2 1l5 5-5 5" />
        </DarkScroll>
      </FilePane>
    </ExBody>
    <ExStatus>
      <span>1 item</span>
      <StatusSplit />
      <span>1 item selected</span>
      <Gapped>34 bytes</Gapped>
      <Art size={18} h={14}><path d="M1 1h16v12H1z" fill="#aaa" stroke="#fff" strokeWidth="2" /></Art>
    </ExStatus>
  </Explorer>
);

const NotepadWindow = () => (
  <Notepad aria-label="Notepad">
    <NpTitle>
      <NotepadArt />
      <NpCaption>garlean_note.txt - Notepad</NpCaption>
      <Controls color="#000" />
    </NpTitle>
    <NpMenu>
      {["File", "Edit", "Format", "View", "Help"].map((m) => <button key={m}>{m}</button>)}
    </NpMenu>
    <NpBody>
      <Editor aria-label="Text editor" spellCheck={false} defaultValue="[+] Branded by the Garlean Empire." />
      <Caret />
      <VScroll>
        <Arrow w={12} h={10} d="M1 8l5-5 5 5" />
        <Arrow w={12} h={10} d="M1 2l5 5 5-5" />
      </VScroll>
    </NpBody>
    <HScroll>
      <Arrow w={10} h={12} d="M8 1L3 6l5 5" />
      <Arrow w={10} h={12} d="M2 1l5 5-5 5" />
    </HScroll>
    <NpStatus>
      <NpCell $blank />
      <NpCell $wide>Ln 1, Col 1</NpCell>
      <NpCell>100%</NpCell>
      <NpCell>Windows (CRLF)</NpCell>
      <NpCell>
        UTF-8
        <Grip><Art size={11}><path d="M8 0h3v3H8zM4 4h3v3H4zM8 4h3v3H8zM0 8h3v3H0zM4 8h3v3H4zM8 8h3v3H8z" fill="#bfbfbf" /></Art></Grip>
      </NpCell>
    </NpStatus>
  </Notepad>
);

export default function App() {
  return (
    <Shell>
      <GlobalStyle />
      <HostMenu aria-label="Virtual machine">
        {["File", "Machine", "View", "Input", "Devices", "Help"].map((m) => <button key={m}>{m}</button>)}
      </HostMenu>
      <Desktop>
        <Glow />
        <IconGrid>
          {shortcuts.map(([name, Icon, selected], i) => (
            <Shortcut key={i} $selected={selected}>
              <Icon />
              <Label>{name}</Label>
            </Shortcut>
          ))}
        </IconGrid>
        <Watermark>
          <div>Windows 10 Enterprise Evaluation</div>
          <div>Windows License is expired</div>
          <div>Build 19041.vb_release.191206-1406</div>
        </Watermark>
        <ExplorerWindow />
        <NotepadWindow />
      </Desktop>
      <Taskbar>
        {tasks.map(([name, Icon, state]) => (
          <TaskButton key={name} aria-label={name} $active={state === "active"}>
            <Icon />
            {state && <Running $stack={state === "stack"} $full={state === "active"} />}
          </TaskButton>
        ))}
        <Tray>
          <Weather><NewsIcon />30°C</Weather>
          <TrayIcons>
            <Arrow s={1} w={18} h={10} d="M1 9l8-8 8 8" />
            <BatteryIcon />
            <GlobeIcon />
            <SpeakerIcon />
          </TrayIcons>
          <Clock>8:01 AM<br />11/8/2024</Clock>
          <ActionIcon />
        </Tray>
      </Taskbar>
    </Shell>
  );
}
